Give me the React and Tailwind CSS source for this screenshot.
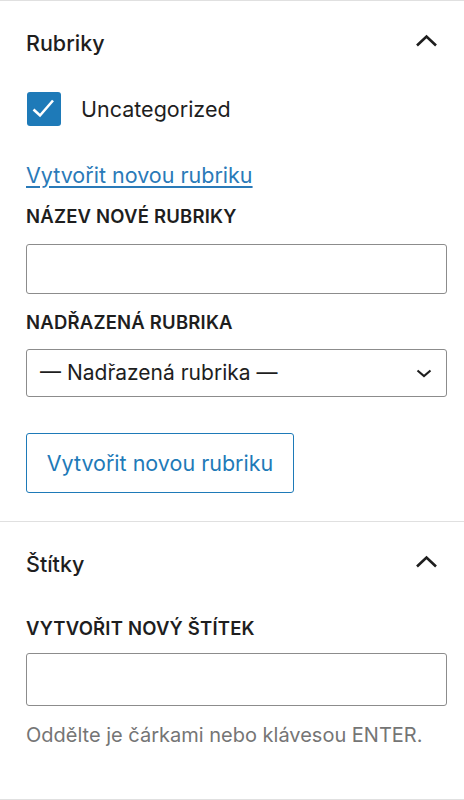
const ChevronUp = () => (
  <svg width="23" height="13" viewBox="0 0 23 13" className="text-[#1e1e1e] mb-[6px]">
    <path d="M2 11.5L11.5 2.5l9.5 9" fill="none" stroke="currentColor" strokeWidth="2.6" />
  </svg>
);

const ChevronDown = () => (
  <svg width="16" height="9" viewBox="0 0 16 9" className="text-[#1e1e1e]">
    <path d="M1.5 1.5L8 7l6.5-5.5" fill="none" stroke="currentColor" strokeWidth="2.1" />
  </svg>
);

const Label = ({ children, className = "" }) => (
  <div className={`text-[18.5px] leading-5 font-semibold uppercase tracking-[0.2px] text-[#1e1e1e] ${className}`}>{children}</div>
);

const PanelHeader = ({ title }) => (
  <div className="h-[84px] flex items-center justify-between pl-[26px] pr-[26px]">
    <h2 className="text-[21.5px] font-medium text-[#1e1e1e]">{title}</h2>
    <ChevronUp />
  </div>
);

export default function App() {
  return (
    <div
      className="w-[464px] h-[800px] bg-white border-t border-b border-[#e0e0e0] flex flex-col"
      style={{ fontFamily: "Inter, 'Noto Sans', sans-serif" }}
    >
      <section className="border-b border-[#e0e0e0] pb-[28px]">
        <PanelHeader title="Rubriky" />
        <div className="px-[26px]">
          <label className="mt-[7px] flex items-center gap-[20px]">
            <span className="ml-[1px] w-[34px] h-[34px] rounded-[3px] bg-[#1e7ab8] flex items-center justify-center">
              <svg width="34" height="34" viewBox="0 0 34 34">
                <path d="M6.5 17.5l6.5 6 13-15" fill="none" stroke="white" strokeWidth="2.6" />
              </svg>
            </span>
            <span className="text-[21.5px] leading-7 text-[#1e1e1e]">Uncategorized</span>
          </label>

          <a href="#" className="block mt-[35px] text-[21.5px] leading-7 text-[#2a7ab8] underline underline-offset-[3px]">
            Vytvořit novou rubriku
          </a>

          <Label className="mt-[17px]">Název nové rubriky</Label>
          <input className="mt-[18px] block w-[421px] h-[50px] border border-[#8c8c8c] rounded-[3px] px-3 text-[21.5px]" />

          <Label className="mt-[18px]">Nadřazená rubrika</Label>
          <div className="mt-[17px] w-[421px] h-[48px] border border-[#8c8c8c] rounded-[3px] flex items-center justify-between pl-[13px] pr-[14px]">
            <span className="text-[21px] text-[#1e1e1e]">— Nadřazená rubrika —</span>
            <ChevronDown />
          </div>

          <button className="mt-[36px] w-[268px] h-[60px] border border-[#1e7ab8] rounded-[3px] text-[21.5px] text-[#1e7ab8]">
            Vytvořit novou rubriku
          </button>
        </div>
      </section>

      <section className="flex-1">
        <PanelHeader title="Štítky" />
        <div className="px-[26px]">
          <Label className="mt-[12px]">Vytvořit nový štítek</Label>
          <input className="mt-[15px] block w-[421px] h-[53px] border border-[#8c8c8c] rounded-[3px] px-3 text-[21.5px]" />
          <p className="mt-[17px] text-[20px] leading-6 text-[#757575]">Oddělte je čárkami nebo klávesou ENTER.</p>
        </div>
      </section>
    </div>
  );
}
